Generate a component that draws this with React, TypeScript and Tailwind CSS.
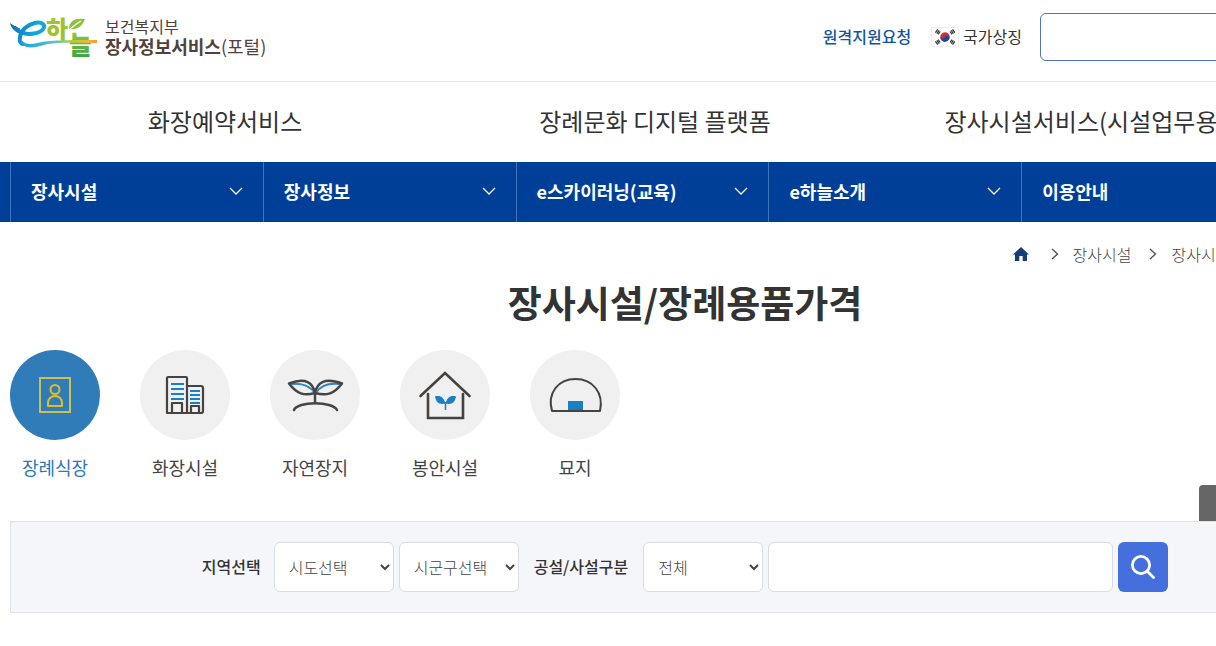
import type { ReactNode } from "react";

const services = ["화장예약서비스", "장례문화 디지털 플랫폼", "장사시설서비스(시설업무용)"];
const menus = ["장사시설", "장사정보", "e스카이러닝(교육)", "e하늘소개", "이용안내"];

function Logo() {
  return (
    <svg viewBox="0 0 90 44" className="h-11 w-[90px] shrink-0 overflow-visible" aria-hidden="true">
      <defs>
        <linearGradient id="swoosh" gradientUnits="userSpaceOnUse" x1="0" y1="8" x2="46" y2="30">
          <stop offset="0" stopColor="#0f6fb8" />
          <stop offset="0.5" stopColor="#12a5dd" />
          <stop offset="1" stopColor="#2f9fd8" />
        </linearGradient>
        <linearGradient id="tail" gradientUnits="userSpaceOnUse" x1="14" y1="0" x2="88" y2="0">
          <stop offset="0" stopColor="#1fa6de" />
          <stop offset="0.4" stopColor="#58c0cf" />
          <stop offset="0.62" stopColor="#a8cf45" />
          <stop offset="0.85" stopColor="#f3b63a" />
          <stop offset="1" stopColor="#f59a2c" />
        </linearGradient>
        <linearGradient id="grass" gradientUnits="userSpaceOnUse" x1="0" y1="16" x2="0" y2="43">
          <stop offset="0" stopColor="#9cc93b" />
          <stop offset="1" stopColor="#33a445" />
        </linearGradient>
      </defs>
      <text x="36" y="23" fontSize="24" fontWeight="900" fontFamily="Noto Sans CJK KR, sans-serif" fill="#9fc32f">하</text>
      <text x="59" y="39" fontSize="25" fontWeight="900" fontFamily="Noto Sans CJK KR, sans-serif" fill="url(#grass)">늘</text>
      <path d="M59 14C59 6 65 3 75 4C72 12 67 15 59 14Z" fill="#8fc03a" />
      <path d="M60 14C64 11 67 8 71 6" fill="none" stroke="#fff" strokeWidth="1.2" />
      <path d="M0 8C3 10 6 12 10 13.500L9 17C4 16 1 13 0 8Z" fill="#0f6fb8" />
      <path
        d="M5 13C9 18 17 20 24 18.500C33 17 36 12 33 9C29 6 21 8 15 13C9 19 8 28 13 29"
        fill="none"
        stroke="url(#swoosh)"
        strokeWidth="4"
        strokeLinecap="round"
      />
      <path d="M11 23C12 29 19 30 27 28C41 25 55 25 87 25L87 28C60 28 46 27 34 30C22 34 10 34 11 23Z" fill="url(#tail)" />
    </svg>
  );
}

function Flag() {
  return (
    <svg viewBox="0 0 28 20" className="h-5 w-7 shrink-0" aria-hidden="true">
      <rect x="0.5" y="0.5" width="27" height="19" fill="#fff" stroke="#eeeeee" />
      <g transform="rotate(20 14 10)">
        <circle cx="14" cy="10" r="4.7" fill="#d02c34" />
        <path d="M9.3 10a4.7 4.7 0 0 0 9.4 0a2.35 2.35 0 0 0-4.7 0a2.35 2.35 0 0 1-4.7 0Z" fill="#174a9c" />
      </g>
      <g stroke="#333" strokeWidth="1.2">
        <path d="M4.4 5.6L6.8 2.4M5.8 6.6L8.2 3.4M7.1 7.4L9.3 4.5" />
        <path d="M19 4.5L21 7.4M20.2 3.4L22.4 6.6M21.5 2.4L23.8 5.6" />
        <path d="M4.4 14.4L6.8 17.6M5.8 13.4L8.2 16.6M7.1 12.6L9.3 15.5" />
        <path d="M19 15.5L21 12.6M20.2 16.6L22.4 13.4M21.5 17.6L23.8 14.4" />
      </g>
    </svg>
  );
}

const icons: Record<string, ReactNode> = {
  장례식장: (
    <g fill="none" stroke="#e3bd24" strokeWidth="2">
      <rect x="30" y="28" width="30" height="34" stroke="#c9c156" />
      <circle cx="45" cy="39.500" r="4.500" />
      <path d="M38 56V53C38 43.500 52 43.500 52 53V56Z" strokeLinejoin="round" />
    </g>
  ),
  화장시설: (
    <g fill="none">
      <path d="M31 34H44M31 39H44M31 44H44M31 49H44M50 41H60M50 45H60M50 49H60M50 53H60" stroke="#1b7fc4" strokeWidth="2" />
      <g stroke="#45423f" strokeWidth="2.200" strokeLinejoin="round">
        <path d="M27 63V28Q27 27 28 27H46Q47 27 47 28V63ZM47 36H61Q63 36 63 38V61Q63 63 61 63H47" />
        <path d="M32 63V53H42V63M51 63V56H59V63" />
      </g>
    </g>
  ),
  자연장지: (
    <g fill="none" strokeWidth="2.500" strokeLinecap="round" strokeLinejoin="round">
      <path d="M22 34C31 33 40 36 45 43M69 34C58 33 50 36 46 43" stroke="#2f83c8" strokeWidth="2" />
      <g stroke="#454545">
        <path d="M45 43C43 33 36 27 19 33.500C27 44 34 46 45 43C47 33 54 27 72 33.500C64 44 57 46 45 43V53" />
        <path d="M24 60C27 51 63 51 67 60" />
      </g>
    </g>
  ),
  봉안시설: (
    <g fill="none">
      <path d="M20.500 46L45 23L69.500 46M28 44V68H63V44" stroke="#45423f" strokeWidth="2.600" strokeLinecap="round" strokeLinejoin="miter" />
      <path d="M45.500 54C44 47 40 45 35 46.500C36 53 40 55 45.500 53.500C51 55 55 53 56 46.500C51 45 47 47 45.500 54Z" fill="#1b7fc4" />
      <path d="M45.500 52V60" stroke="#1b7fc4" strokeWidth="1.500" />
    </g>
  ),
  묘지: (
    <g fill="none">
      <rect x="38" y="51" width="15" height="10" fill="#1b7fc4" />
      <path d="M22 61C17 43 28 29 45.500 29C63 29 74 43 70 61Z" stroke="#45423f" strokeWidth="2" strokeLinejoin="round" />
    </g>
  ),
};

function Select({ id, label, option }: { id: string; label: string; option: string }) {
  return (
    <select
      id={id}
      aria-label={label}
      className="h-[50px] w-[120px] rounded-md border border-[#d9dce0] bg-white pl-2.5 text-base font-light text-[#444]"
    >
      <option>{option}</option>
    </select>
  );
}

function Crumb() {
  return (
    <svg viewBox="0 0 8 12" className="mr-3.5 ml-[18px] h-3 w-2" fill="none" stroke="#555" strokeWidth="1.400" aria-hidden="true">
      <path d="M1 1L6.500 6L1 11" />
    </svg>
  );
}

export default function App() {
  return (
    <div className="relative min-h-screen overflow-x-clip bg-white font-['Noto_Sans_CJK_KR',sans-serif] text-[#333]">
      <div className="min-w-[1370px]">
        <header>
          <div className="flex h-[82px] items-start justify-between border-b border-[#e3e3e3] px-2.5">
            <a href="#" className="flex items-start gap-[5px] pt-[15px]">
              <Logo />
              <span className="flex flex-col pt-px text-[#50413c]">
                <span className="text-base leading-5">보건복지부</span>
                <span className="text-lg leading-5">
                  <b>장사정보서비스</b>(포털)
                </span>
              </span>
            </a>
            <div className="flex items-center pt-[13px] text-base">
              <a href="#" className="mr-5 pb-0.5 font-medium text-[#0f569e]">원격지원요청</a>
              <a href="#" className="mr-[18px] flex items-center gap-1">
                <Flag />
                <span className="pb-0.5">국가상징</span>
              </a>
              <input
                type="search"
                aria-label="통합검색"
                className="h-12 w-80 rounded-md border border-[#5273c4] bg-white px-4"
              />
            </div>
          </div>
          <nav aria-label="서비스" className="grid h-20 grid-cols-3 items-center pr-[70px] pb-0.5 pl-2.5 text-center text-2xl">
            {services.map((name) => (
              <a key={name} href="#" className="whitespace-nowrap">{name}</a>
            ))}
          </nav>
          <nav aria-label="주요 메뉴" className="bg-[#003f98] pr-24 pl-2.5">
            <ul className="grid grid-cols-5">
              {menus.map((name) => (
                <li key={name} className="border-l border-[#3f74ba]">
                  <a href="#" className="flex h-[60px] items-center justify-between px-5 pb-0.5 text-lg font-bold text-white">
                    {name}
                    <svg viewBox="0 0 14 8" className="h-2 w-3.5" fill="none" stroke="#fff" strokeWidth="1.3" aria-hidden="true">
                      <path d="M1 1L7 7L13 1" />
                    </svg>
                  </a>
                </li>
              ))}
            </ul>
          </nav>
        </header>

        <main className="px-2.5">
          <nav aria-label="현재 위치" className="flex h-[60px] items-center justify-end pt-[3px] pr-[35px] text-base font-light whitespace-nowrap text-[#444]">
            <a href="#" aria-label="홈" className="mr-1">
              <svg viewBox="0 0 16 14" className="h-3.5 w-4" fill="#153e78" aria-hidden="true">
                <path d="M8 0L16 7.500H14V14H9.700V9H6.300V14H2V7.500H0Z" />
              </svg>
            </a>
            <Crumb />
            <a href="#">장사시설</a>
            <Crumb />
            <a href="#">장사시설/장례용품가격</a>
          </nav>
          <h1 className="text-center text-[37px] leading-10 font-bold">장사시설/장례용품가격</h1>

          <ul className="mt-7 flex gap-10">
            {Object.keys(icons).map((name, i) => (
              <li key={name}>
                <a href="#" className={i === 0 ? "block w-[90px] text-center text-[#2d78b8]" : "block w-[90px] text-center text-[#444]"}>
                  <svg viewBox="0 0 90 90" className="h-[90px] w-[90px]" aria-hidden="true">
                    <circle cx="45" cy="45" r="45" fill={i === 0 ? "#2f7cb8" : "#f0f0f0"} />
                    {icons[name]}
                  </svg>
                  <span className="mt-[13px] block text-lg leading-7">{name}</span>
                </a>
              </li>
            ))}
          </ul>

          <form className="mt-10 flex items-center justify-center gap-[5px] border border-[#e0e4e8] bg-[#f4f6fa] py-5 text-base">
            <label htmlFor="sido" className="mr-2 pb-0.5 font-medium">지역선택</label>
            <Select id="sido" label="시도선택" option="시도선택" />
            <Select id="sigungu" label="시군구선택" option="시군구선택" />
            <label htmlFor="kind" className="mr-2.5 ml-2.5 pb-0.5 font-medium">공설/사설구분</label>
            <Select id="kind" label="공설/사설구분" option="전체" />
            <input type="text" aria-label="검색어" className="h-[50px] w-[345px] rounded-md border border-[#d9dce0] bg-white px-4" />
            <button type="button" aria-label="검색" className="flex size-[50px] items-center justify-center rounded-md bg-[#456fdd]">
              <svg viewBox="0 0 24 24" className="size-6" fill="none" stroke="#fff" strokeWidth="2.800" strokeLinecap="round" aria-hidden="true">
                <circle cx="10" cy="10" r="8.600" />
                <path d="M16.500 16.500L22.500 22.500" />
              </svg>
            </button>
          </form>
        </main>
      </div>
      <div className="absolute top-[485px] right-0 h-9 w-[17px] rounded-tl bg-[#666]" />
    </div>
  );
}
